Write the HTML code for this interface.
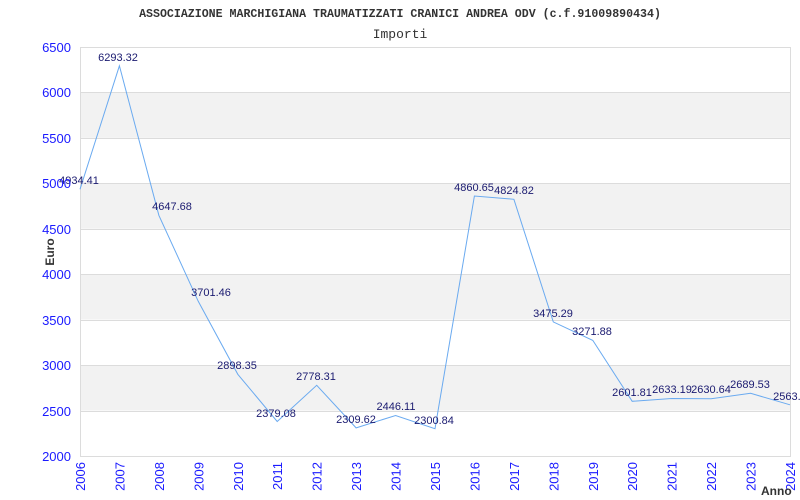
<!DOCTYPE html>
<html><head><meta charset="utf-8"><style>
html,body{margin:0;padding:0;background:#fff;}
svg{display:block}
</style></head><body>
<svg width="800" height="500" xmlns="http://www.w3.org/2000/svg">
<rect width="800" height="500" fill="#fff"/>
<g fill="#f2f2f2">
<rect x="80" y="92.4" width="710" height="45.4"/>
<rect x="80" y="183.3" width="710" height="45.4"/>
<rect x="80" y="274.2" width="710" height="45.4"/>
<rect x="80" y="365.1" width="710" height="45.4"/>
</g>
<g stroke="#dcdcdc" stroke-width="1">
<line x1="80" y1="47.5" x2="790" y2="47.5"/>
<line x1="80" y1="92.5" x2="790" y2="92.5"/>
<line x1="80" y1="138.5" x2="790" y2="138.5"/>
<line x1="80" y1="183.5" x2="790" y2="183.5"/>
<line x1="80" y1="229.5" x2="790" y2="229.5"/>
<line x1="80" y1="274.5" x2="790" y2="274.5"/>
<line x1="80" y1="320.5" x2="790" y2="320.5"/>
<line x1="80" y1="365.5" x2="790" y2="365.5"/>
<line x1="80" y1="411.5" x2="790" y2="411.5"/>
<line x1="80" y1="456.5" x2="790" y2="456.5"/>
<line x1="80.5" y1="47" x2="80.5" y2="457"/>
<line x1="790.5" y1="47" x2="790.5" y2="457"/>
</g>
<polyline fill="none" stroke="#6aaaf0" stroke-width="1" points="80,189.3 119.4,65.8 158.9,215.4 198.3,301.4 237.8,374.3 277.2,421.5 316.7,385.3 356.1,427.9 395.6,415.5 435,428.7 474.4,196 513.9,199.3 553.3,321.9 592.8,340.4 632.2,401.3 671.7,398.5 711.1,398.7 750.6,393.3 790,404.8"/>
<g font-family="Liberation Sans, sans-serif" font-size="11" fill="#1a1a70" text-anchor="middle">
<text x="79" y="184">4934.41</text>
<text x="118" y="61">6293.32</text>
<text x="172" y="210">4647.68</text>
<text x="211" y="296">3701.46</text>
<text x="237" y="369">2898.35</text>
<text x="276" y="417">2379.08</text>
<text x="316" y="380">2778.31</text>
<text x="356" y="423">2309.62</text>
<text x="396" y="410">2446.11</text>
<text x="434" y="424">2300.84</text>
<text x="474" y="191">4860.65</text>
<text x="514" y="194">4824.82</text>
<text x="553" y="317">3475.29</text>
<text x="592" y="335">3271.88</text>
<text x="632" y="396">2601.81</text>
<text x="672" y="393">2633.19</text>
<text x="711" y="393">2630.64</text>
<text x="750" y="388">2689.53</text>
<text x="790" y="400">2563.9</text>
</g>
<g font-family="Liberation Sans, sans-serif" font-size="13" fill="#1a1aff" text-anchor="end">
<text x="71" y="52">6500</text>
<text x="71" y="97">6000</text>
<text x="71" y="143">5500</text>
<text x="71" y="188">5000</text>
<text x="71" y="234">4500</text>
<text x="71" y="279">4000</text>
<text x="71" y="325">3500</text>
<text x="71" y="370">3000</text>
<text x="71" y="416">2500</text>
<text x="71" y="461">2000</text>
</g>
<g font-family="Liberation Sans, sans-serif" font-size="13" fill="#1a1aff" text-anchor="end">
<text transform="translate(85,462) rotate(-90)">2006</text>
<text transform="translate(124.4,462) rotate(-90)">2007</text>
<text transform="translate(163.9,462) rotate(-90)">2008</text>
<text transform="translate(203.3,462) rotate(-90)">2009</text>
<text transform="translate(242.8,462) rotate(-90)">2010</text>
<text transform="translate(282.2,462) rotate(-90)">2011</text>
<text transform="translate(321.7,462) rotate(-90)">2012</text>
<text transform="translate(361.1,462) rotate(-90)">2013</text>
<text transform="translate(400.6,462) rotate(-90)">2014</text>
<text transform="translate(440,462) rotate(-90)">2015</text>
<text transform="translate(479.4,462) rotate(-90)">2016</text>
<text transform="translate(518.9,462) rotate(-90)">2017</text>
<text transform="translate(558.3,462) rotate(-90)">2018</text>
<text transform="translate(597.8,462) rotate(-90)">2019</text>
<text transform="translate(637.2,462) rotate(-90)">2020</text>
<text transform="translate(676.7,462) rotate(-90)">2021</text>
<text transform="translate(716.1,462) rotate(-90)">2022</text>
<text transform="translate(755.6,462) rotate(-90)">2023</text>
<text transform="translate(795,462) rotate(-90)">2024</text>
</g>
<text x="400" y="17" font-family="Liberation Mono, monospace" font-size="11.6" font-weight="bold" fill="#333" text-anchor="middle">ASSOCIAZIONE MARCHIGIANA TRAUMATIZZATI CRANICI ANDREA ODV (c.f.91009890434)</text>
<text x="400" y="38" font-family="Liberation Mono, monospace" font-size="13" fill="#333" text-anchor="middle">Importi</text>
<text transform="translate(54,252) rotate(-90)" font-family="Liberation Sans, sans-serif" font-size="12" font-weight="bold" fill="#333" text-anchor="middle">Euro</text>
<text x="761" y="495" font-family="Liberation Sans, sans-serif" font-size="12" font-weight="bold" fill="#333">Anno</text>
</svg>
</body></html>
